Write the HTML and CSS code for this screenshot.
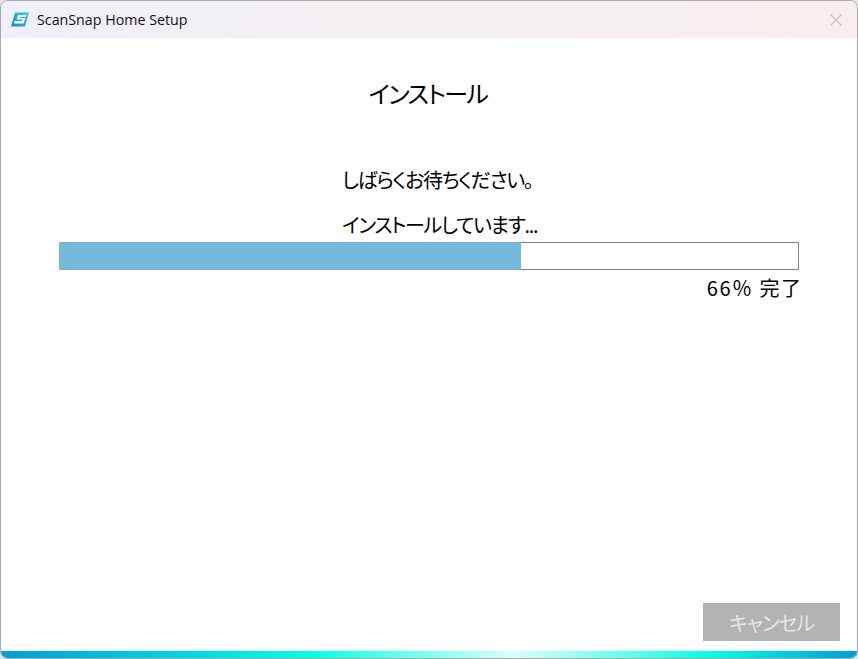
FILE: index.html
```html
<!DOCTYPE html>
<html lang="ja">
<head>
<meta charset="utf-8">
<title>ScanSnap Home Setup</title>
<link rel="stylesheet" href="styles.css">
</head>
<body>
<div class="window">
  <header class="titlebar">
    <svg class="app-icon" width="18" height="15" viewBox="0 0 18 15">
      <defs><linearGradient id="ic" x1="0" y1="1" x2="1" y2="0"><stop offset="0" stop-color="#0f8fd0"/><stop offset="1" stop-color="#45c8ee"/></linearGradient></defs>
      <path d="M4 0.5H18L14 14.5H0Z" fill="url(#ic)"/>
      <path d="M15.5 3H7.2L5.8 7.6H11.6L11.2 9H3.6L3 11.6H12.6L14.2 5.9H8.4L8.7 5H15Z" fill="#fff"/>
    </svg>
    <span class="app-title">ScanSnap Home Setup</span>
    <svg class="close" width="12" height="12" viewBox="0 0 12 12">
      <path d="M0.5 0.5L11.5 11.5M11.5 0.5L0.5 11.5" stroke="#c4c2c2" stroke-width="1.1" fill="none"/>
    </svg>
  </header>
  <main class="content">
    <h1 class="heading">インストール</h1>
    <p class="wait">しばらくお待ちください。</p>
    <p class="status">インストールしています...</p>
    <div class="progress"><div class="progress-fill" style="width:462px"></div></div>
    <p class="percent">66％ 完了</p>
  </main>
  <footer class="footer">
    <button class="cancel" disabled>キャンセル</button>
  </footer>
  <div class="accent"></div>
</div>
</body>
</html>
```
FILE: styles.css
```css
* { box-sizing: border-box; }
html, body { margin: 0; height: 100%; background: #e4e4e4; }
body { font-family: "Noto Sans CJK JP", "Noto Sans", sans-serif; color: #000; overflow: hidden; }
.window {
  width: 858px; height: 659px;
  display: flex; flex-direction: column;
  background: #fff;
  border: 1px solid #a9a9a9;
  border-radius: 8px;
  overflow: hidden;
}
.titlebar {
  height: 37px; flex: none;
  display: flex; align-items: center;
  padding: 0 15px 0 10px;
  background: linear-gradient(90deg, #f1f0f8, #f8efed);
}
.app-icon { flex: none; margin-right: 8px; }
.app-title { font-family: "Open Sans", sans-serif; font-size: 14.25px; color: #111; flex: 1; }
.close { flex: none; }
.content { flex: 1; display: flex; flex-direction: column; padding: 0 58px; font-feature-settings: "palt"; }
.heading { margin: 37px 0 0; padding-right: 2px; font-size: 24px; font-weight: 400; line-height: 36px; text-align: center; letter-spacing: -1.6px; }
.wait { margin: 54px 0 0; padding-left: 283px; font-size: 20px; line-height: 30px; letter-spacing: -1.25px; }
.status { margin: 17px 0 0; padding-left: 283px; font-size: 20px; line-height: 26px; letter-spacing: -1.3px; }
.progress { height: 28px; border: 1px solid #858585; background: #fff; margin-top: 4px; }
.progress-fill { height: 28px; margin: -1px 0 0 -1px; background: #74bbda; }
.percent { margin: 4px -3.5px 0 0; font-size: 20px; line-height: 28px; text-align: right; font-feature-settings: normal; letter-spacing: 1.5px; }
.footer { flex: none; display: flex; justify-content: flex-end; padding: 0 17px 10px 0; }
.cancel {
  width: 137px; height: 38px; padding: 0; border: 0;
  background: #b3b3b3; color: #e6e6e6;
  font-family: inherit; font-size: 20px; font-feature-settings: "palt"; letter-spacing: -1.2px;
}
.accent { height: 7px; flex: none; background: linear-gradient(90deg, #009fd8, #00ffe8 36%, #dcfffb 60%, #00ffe8 83%, #009fd8); }
```
